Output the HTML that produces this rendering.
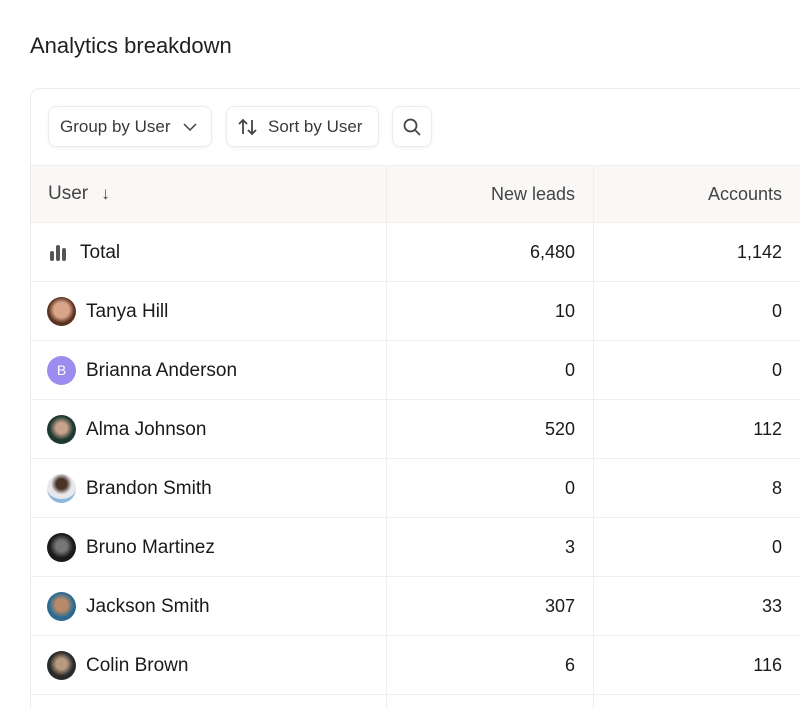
<!DOCTYPE html>
<html style="width:800px;height:708px;overflow:hidden"><head><style>
*{margin:0;padding:0;box-sizing:border-box}
body{width:800px;height:708px;overflow:hidden;background:#fff;font-family:"Liberation Sans",sans-serif;color:#1a1a1a;position:relative}
.title{position:absolute;left:30px;top:33px;font-size:22px;color:#1f1f1f}
.card{position:absolute;left:30px;top:88px;width:780px;height:630px;border:1px solid #eeecea;border-radius:10px}
.btn{position:absolute;top:106px;height:41px;border:1px solid #eeeceb;border-radius:8px;box-shadow:0 1px 3px rgba(0,0,0,.06);font-size:17px;color:#3a3a3a;display:flex;align-items:center;padding:0 11px;background:#fff;white-space:nowrap}
.hdr{position:absolute;left:31px;top:165px;width:770px;height:58px;background:#faf8f6;border-top:1px solid #f0eeec;border-bottom:1px solid #f0eeec}
.row{position:absolute;left:31px;width:770px;height:59px;border-bottom:1px solid #f0eeec}
.vl{position:absolute;top:165px;width:1px;height:543px;background:#f0eeec}
.c{position:absolute;font-size:19px;line-height:59px}
.av{position:absolute;left:16px;top:15px;width:29px;height:29px;border-radius:50%}
.nm{position:absolute;left:55px;font-size:19px;line-height:59px}
.v1{position:absolute;right:226px;font-size:18px;line-height:59px}
.v2{position:absolute;right:19px;font-size:18px;line-height:59px}
</style></head><body>
<div class="title">Analytics breakdown</div>
<div class="card"></div>
<div class="btn" style="left:48px;width:164px">Group by User<svg style="margin-left:12px" width="14" height="8" viewBox="0 0 14 8"><path d="M1 1l6 6 6-6" fill="none" stroke="#444" stroke-width="1.5"/></svg></div>
<div class="btn" style="left:226px;width:153px"><svg width="20" height="18" viewBox="0 0 20 18" style="margin-right:10px"><path d="M5 16V2M1 6l4-4 4 4M14 2v14M10 12l4 4 4-4" fill="none" stroke="#444" stroke-width="1.8"/></svg>Sort by User</div>
<div class="btn" style="left:392px;width:40px;padding:0 9px"><svg width="20" height="20" viewBox="0 0 20 20"><circle cx="8.5" cy="8.5" r="6" fill="none" stroke="#444" stroke-width="1.8"/><path d="M13 13l5 5" stroke="#444" stroke-width="1.8"/></svg></div>
<div class="hdr"><span class="c" style="left:17px;line-height:56px;color:#444">User <span style="margin-left:8px;font-size:17px">↓</span></span>
<span class="c" style="right:226px;line-height:56px;color:#444;font-size:18px">New leads</span>
<span class="c" style="right:19px;line-height:56px;color:#444;font-size:18px">Accounts</span></div>
<div class="row" style="top:223px"><svg style="position:absolute;left:19px;top:22px" width="18" height="16"><rect x="0" y="6" width="4" height="10" rx="2" fill="#555"/><rect x="6" y="0" width="4" height="16" rx="2" fill="#555"/><rect x="12" y="3" width="4" height="13" rx="2" fill="#555"/></svg><span class="nm" style="left:49px">Total</span><span class="v1">6,480</span><span class="v2">1,142</span></div>
<div class="row" style="top:282px"><div class="av" style="background:radial-gradient(circle at 50% 45%,#d9a58a 35%,#5a3220 60%)"></div><span class="nm">Tanya Hill</span><span class="v1">10</span><span class="v2">0</span></div>
<div class="row" style="top:341px"><div class="av" style="background:#9b8cf0;color:#fff;font-size:14px;text-align:center;line-height:29px">B</div><span class="nm">Brianna Anderson</span><span class="v1">0</span><span class="v2">0</span></div>
<div class="row" style="top:400px"><div class="av" style="background:radial-gradient(circle at 50% 45%,#c9a28e 25%,#1d3a30 55%)"></div><span class="nm">Alma Johnson</span><span class="v1">520</span><span class="v2">112</span></div>
<div class="row" style="top:459px"><div class="av" style="background:radial-gradient(circle at 50% 40%,#4a3428 25%,#e8e8ec 50%);border-bottom:4px solid #8cb8e0"></div><span class="nm">Brandon Smith</span><span class="v1">0</span><span class="v2">8</span></div>
<div class="row" style="top:518px"><div class="av" style="background:radial-gradient(circle at 50% 45%,#777 25%,#1a1a1a 55%)"></div><span class="nm">Bruno Martinez</span><span class="v1">3</span><span class="v2">0</span></div>
<div class="row" style="top:577px"><div class="av" style="background:radial-gradient(circle at 50% 45%,#b88a6a 28%,#2a6a90 58%)"></div><span class="nm">Jackson Smith</span><span class="v1">307</span><span class="v2">33</span></div>
<div class="row" style="top:636px"><div class="av" style="background:radial-gradient(circle at 50% 45%,#b89a80 25%,#2a2a2a 55%)"></div><span class="nm">Colin Brown</span><span class="v1">6</span><span class="v2">116</span></div>
<div class="vl" style="left:386px"></div>
<div class="vl" style="left:593px"></div>
</body></html>
